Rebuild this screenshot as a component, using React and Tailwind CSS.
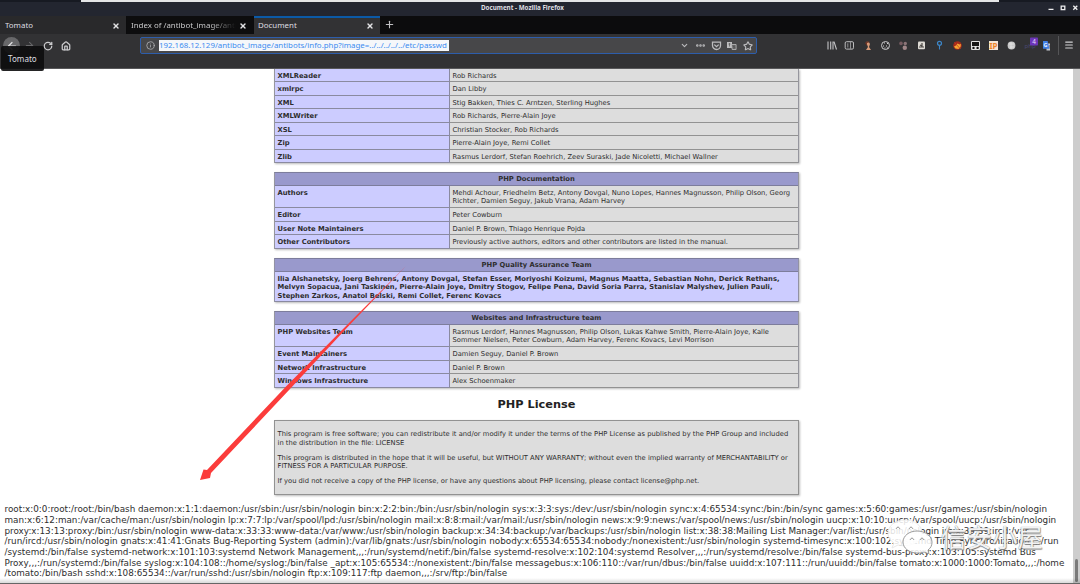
import React from "react";
import { ArrowLeft, ArrowRight, RotateCw, House, Info, ChevronDown, Ellipsis, Star, Menu, Plus, X } from "lucide-react";

const credits = [
  ["XMLReader", ["Rob Richards"], "h-[13px]"],
  ["xmlrpc", ["Dan Libby"], "h-[14px]"],
  ["XML", ["Stig Bakken, Thies C. Arntzen, Sterling Hughes"], "h-[13px]"],
  ["XMLWriter", ["Rob Richards, Pierre-Alain Joye"], "h-[14px]"],
  ["XSL", ["Christian Stocker, Rob Richards"], "h-[13px]"],
  ["Zip", ["Pierre-Alain Joye, Remi Collet"], "h-[14px]"],
  ["Zlib", ["Rasmus Lerdorf, Stefan Roehrich, Zeev Suraski, Jade Nicoletti, Michael Wallner"], "h-[13px]"],
];
const docs = [
  ["Authors", ["Mehdi Achour, Friedhelm Betz, Antony Dovgal, Nuno Lopes, Hannes Magnusson, Philip Olson, Georg", "Richter, Damien Seguy, Jakub Vrana, Adam Harvey"], "h-[22px]"],
  ["Editor", ["Peter Cowburn"], "h-[14px]"],
  ["User Note Maintainers", ["Daniel P. Brown, Thiago Henrique Pojda"], "h-[13px]"],
  ["Other Contributors", ["Previously active authors, editors and other contributors are listed in the manual."], "h-[14px]"],
];
const infra = [
  ["PHP Websites Team", ["Rasmus Lerdorf, Hannes Magnusson, Philip Olson, Lukas Kahwe Smith, Pierre-Alain Joye, Kalle", "Sommer Nielsen, Peter Cowburn, Adam Harvey, Ferenc Kovacs, Levi Morrison"], "h-[22px]"],
  ["Event Maintainers", ["Damien Seguy, Daniel P. Brown"], "h-[14px]"],
  ["Network Infrastructure", ["Daniel P. Brown"], "h-[13px]"],
  ["Windows Infrastructure", ["Alex Schoenmaker"], "h-[14px]"],
];
const qa = [
  "Ilia Alshanetsky, Joerg Behrens, Antony Dovgal, Stefan Esser, Moriyoshi Koizumi, Magnus Maatta, Sebastian Nohn, Derick Rethans,",
  "Melvyn Sopacua, Jani Taskinen, Pierre-Alain Joye, Dmitry Stogov, Felipe Pena, David Soria Parra, Stanislav Malyshev, Julien Pauli,",
  "Stephen Zarkos, Anatol Belski, Remi Collet, Ferenc Kovacs",
];
const passwd = [
  "root:x:0:0:root:/root:/bin/bash daemon:x:1:1:daemon:/usr/sbin:/usr/sbin/nologin bin:x:2:2:bin:/bin:/usr/sbin/nologin sys:x:3:3:sys:/dev:/usr/sbin/nologin sync:x:4:65534:sync:/bin:/bin/sync games:x:5:60:games:/usr/games:/usr/sbin/nologin",
  "man:x:6:12:man:/var/cache/man:/usr/sbin/nologin lp:x:7:7:lp:/var/spool/lpd:/usr/sbin/nologin mail:x:8:8:mail:/var/mail:/usr/sbin/nologin news:x:9:9:news:/var/spool/news:/usr/sbin/nologin uucp:x:10:10:uucp:/var/spool/uucp:/usr/sbin/nologin",
  "proxy:x:13:13:proxy:/bin:/usr/sbin/nologin www-data:x:33:33:www-data:/var/www:/usr/sbin/nologin backup:x:34:34:backup:/var/backups:/usr/sbin/nologin list:x:38:38:Mailing List Manager:/var/list:/usr/sbin/nologin irc:x:39:39:ircd:/var",
  "/run/ircd:/usr/sbin/nologin gnats:x:41:41:Gnats Bug-Reporting System (admin):/var/lib/gnats:/usr/sbin/nologin nobody:x:65534:65534:nobody:/nonexistent:/usr/sbin/nologin systemd-timesync:x:100:102:systemd Time Synchronization,,,:/run",
  "/systemd:/bin/false systemd-network:x:101:103:systemd Network Management,,,:/run/systemd/netif:/bin/false systemd-resolve:x:102:104:systemd Resolver,,,:/run/systemd/resolve:/bin/false systemd-bus-proxy:x:103:105:systemd Bus",
  "Proxy,,,:/run/systemd:/bin/false syslog:x:104:108::/home/syslog:/bin/false _apt:x:105:65534::/nonexistent:/bin/false messagebus:x:106:110::/var/run/dbus:/bin/false uuidd:x:107:111::/run/uuidd:/bin/false tomato:x:1000:1000:Tomato,,,:/home",
  "/tomato:/bin/bash sshd:x:108:65534::/var/run/sshd:/usr/sbin/nologin ftp:x:109:117:ftp daemon,,,:/srv/ftp:/bin/false",
];

function Heading({ children }) {
  return (
    <div className="h-[13px] border-b border-[#7d7d9c] bg-[#9999cc] text-center font-bold leading-[12px] tracking-[0.03px]">{children}</div>
  );
}

function Panel({ title, rows, open }) {
  return (
    <div className={(open ? "" : "border-t border-t-[#7d7d9c] ") + "w-[525px] border-x border-x-[#96969e] shadow-[0.5px_1px_2px_#bbb]"}>
      {title && <Heading>{title}</Heading>}
      {rows.map(([name, lines, height]) => (
        <div key={name} className={"flex " + height}>
          <div className="w-[175px] border-b border-r border-[#8a8aa0] bg-[#ccccff] pl-[2.5px] pt-[2.5px] font-bold leading-[8.5px] tracking-[0.025px]">{name}</div>
          <div className="flex-1 border-b border-[#929292] bg-[#dddddd] pl-[2.5px] pt-[2.5px] leading-[8.5px]">
            {lines.map((line) => <div key={line}>{line}</div>)}
          </div>
        </div>
      ))}
    </div>
  );
}

function Tab({ label, active, dark, fade }) {
  return (
    <div className={"relative flex h-[18px] w-[126px] items-center justify-between overflow-hidden pr-[6px] pt-[1px] " + (active ? "bg-[#323234] pl-[4px]" : dark ? "bg-[#0d0d0e] pl-[4px]" : "bg-[#29292b] pl-[5px]")}>
      {active && <div className="absolute inset-x-0 top-0 h-[2px] bg-[#0b5aa8]" />}
      <span className={"w-[105px] overflow-hidden whitespace-nowrap " + (fade ? "bg-gradient-to-r from-[#d8d8da] from-75% to-transparent bg-clip-text text-transparent" : "")}>{label}</span>
      <X size={8} strokeWidth={4} className="shrink-0 text-[#e4e4e6]" />
    </div>
  );
}

function ExtensionIcons() {
  return (
    <svg width="230" height="22" viewBox="820 34 230 22" fill="none">
      <path d="M828 41.5v8M830.7 41.5v8M833 41.5v8M834 41.7l2.5 7.8" stroke="#c4c4c6" strokeWidth="1.1" />
      <rect x="845.2" y="41.7" width="8.3" height="7.4" rx="1.3" stroke="#bbbbbd" strokeWidth="1" />
      <path d="M847.8 43.3v4.2M850.5 42v7" stroke="#8e8e90" />
      <path d="M866 42q3-1 4 2l-1 3 2 3h-5l2-3z" fill="#d89a78" />
      <path d="M865 43q2-3 5-1l-3 1v3z" fill="#6b3527" />
      <circle cx="885.5" cy="45.5" r="4" stroke="#c8c8ca" />
      <path d="M884 43h.9M887 43.5h1M883 46h1M886 46h1M884.5 48h1M887 48h1" stroke="#d2d2d4" strokeWidth="1.2" />
      <circle cx="901" cy="43.4" r="1.8" fill="#765b60" /><circle cx="905.3" cy="43.5" r="1.7" fill="#8b7477" /><circle cx="904.8" cy="47.8" r="2.2" fill="#a08688" />
      <rect x="918" y="41.5" width="7" height="7.8" rx="1" fill="#dedbd5" />
      <path d="M919 47h5M922 43v3l-2-1" stroke="#4b4744" strokeWidth="1.2" />
      <circle cx="939.5" cy="43.3" r="2" stroke="#3c86c8" strokeWidth="1.2" /><path d="M939.5 45.5v4" stroke="#3c86c8" strokeWidth="1.1" />
      <circle cx="957.5" cy="45.5" r="4.3" fill="#a32a1b" />
      <path d="M954 46.5l2-1 1.5-2 2 1 1.500-.5-.5 3-2 2-3-.5z" fill="#f4a532" /><path d="M954.5 42.500l6 6.500" stroke="#c93a20" strokeWidth=".8" />
      <rect x="971" y="41" width="9" height="9" rx="1" fill="#e1e1e1" /><path d="M972 42h7v4h-7z" fill="#151515" /><circle cx="973.5" cy="47.9" r="1.2" fill="#111" /><circle cx="977.6" cy="47.9" r="1.2" fill="#111" />
      <rect x="989" y="41" width="9" height="9" fill="#f4e6d5" />
      <text x="989.5" y="48.8" fontSize="8" fontWeight="bold" fontFamily="Noto Sans, sans-serif" fill="#ee8226">IP</text>
      <circle cx="1011.5" cy="45.5" r="3.9" fill="#c9c9c9" /><path d="M1009 44h5M1010 47h4M1011 42v7" stroke="#e8e8e8" strokeWidth=".7" />
      <text x="1024.5" y="48" fontSize="6" fontFamily="Noto Sans, sans-serif" fill="#4a4874">php</text>
      <rect x="1030" y="37.5" width="8" height="8" rx=".8" fill="#6b35b8" />
      <text x="1032.3" y="44" fontSize="6.4" fontFamily="Noto Sans, sans-serif" fill="#e8dcfa">4</text>
      <rect x="1046.5" y="43.5" width="5.3" height="7" fill="#c3c5cb" />
      <path d="M1048.500 46h2.500M1049.500 45v3.500" stroke="#7c7f88" strokeWidth=".7" />
      <path d="M1043 41h4.6l1.7 7.7H1043z" fill="#3f7fe5" />
      <text x="1043.4" y="47.2" fontSize="5.5" fontWeight="bold" fontFamily="Noto Sans, sans-serif" fill="#e7efff">G</text>
    </svg>
  );
}

function Browser() {
  return (
    <header className="h-[69px] font-['Noto_Sans',sans-serif] text-[#dedee0]">
      <div className="relative flex h-[16px] items-center justify-center bg-[#232630] text-[6.25px] font-bold text-[#dedfe2]">
        <div className="absolute left-[81px] top-0 h-[2px] w-[918px] bg-[#e4e5e6]" />
        <div className="absolute left-0 top-0 h-[2px] w-[81px] bg-[#171a22]" />
        <div className="absolute right-0 top-0 h-[2px] w-[81px] bg-[#171a22]" />
        <span className="mr-[35px] whitespace-nowrap">Document - Mozilla Firefox</span>
        <svg className="absolute right-0 top-0" width="36" height="16" fill="none" stroke="#eeeeef" strokeWidth="1.3">
          <path d="M4.500 9.400h5M29.300 5.800l4 4M33.300 5.800l-4 4" /><path d="M17.200 6.100h3.600v3.500h-3.600z" />
        </svg>
      </div>
      <div className="flex h-[18px] gap-[1px] bg-[#0c0c0d] text-[7.9px]">
        <Tab label="Tomato" />
        <Tab label="Index of /antibot_image/antibots" dark fade />
        <Tab label="Document" active />
        <Plus size={11} strokeWidth={2.4} className="ml-[2.5px] mt-[3px] text-[#c2c2c4]" />
      </div>
      <div className="relative flex h-[35px] border-b border-[#58585a] bg-[#323234]">
        <div className="flex w-[140px] items-start pl-[3px] pt-[3px]">
          <div className="flex size-[17px] items-center justify-center rounded-full bg-[#68686a]"><ArrowLeft size={12} strokeWidth={2.5} /></div>
          <ArrowRight size={11} strokeWidth={2.2} className="ml-[4px] mt-[3px] text-[#6a6a6c]" />
          <RotateCw size={10} strokeWidth={3} className="ml-[8px] mt-[3.5px] text-[#ccccce]" />
          <House size={10} strokeWidth={3} className="ml-[8px] mt-[3.5px] text-[#ccccce]" />
        </div>
        <div className="mt-[3px] flex h-[17px] w-[617px] items-center rounded-[2px] border border-[#2d5dab] bg-[#474749] pl-[5px]">
          <Info size={9} strokeWidth={2.2} className="text-[#b0b0b2]" />
          <span className="ml-[4px] h-[11px] w-[290px] whitespace-nowrap bg-[#f5f7fa] text-[7.88px] leading-[10.5px] text-[#3c8cf0]">192.168.12.129/antibot_image/antibots/info.php?image=../../../../../etc/passwd</span>
          <div className="ml-auto flex items-center pr-[3px] text-[#bcbcbe]">
            <ChevronDown size={9} strokeWidth={3} />
            <Ellipsis size={11} strokeWidth={3.4} className="ml-[6px]" />
            <svg className="ml-[5px]" width="11" height="10" fill="none" stroke="currentColor" strokeWidth="1.3"><path d="M1.5 1.2h8v3.3a4 4 0 0 1-8 0zM3.3 3.6l2.2 2.1 2.2-2.1" /></svg>
            <svg className="ml-[5px]" width="10" height="10"><path d="M0 1h5v6H0z" fill="#bcbcbe" /><path d="M4.5 3.5h4.6v5H5.2z" fill="#626264" stroke="#bcbcbe" strokeWidth=".8" /><path d="M1.5 3h2M2.5 2v3.5M6 6l1-1 1 2" stroke="#555" strokeWidth=".7" fill="none" /></svg>
            <Star size={10} strokeWidth={2.7} className="ml-[6px]" />
          </div>
        </div>
        <div className="ml-[63px]"><ExtensionIcons /></div>
        <div className="ml-[8px] mt-[2px] h-[19px] w-[1px] bg-[#555557]" />
        <Menu size={10} strokeWidth={2.6} className="ml-[5px] mt-[6px] text-[#d2d2d4]" />
        <div className="absolute left-[1px] top-[12px] h-[25px] w-[43px] rounded-[2px] bg-[#0c0c0d]/90 pl-[7px] text-[8.1px] leading-[25px]">Tomato</div>
      </div>
    </header>
  );
}

export default function App() {
  return (
    <div className="relative h-[584px] w-[1080px] overflow-hidden bg-white">
      <Browser />
      <main className="h-[515px] font-['DejaVu_Sans',sans-serif] text-[6.75px] text-[#2e2e2e]">
        <div className="ml-[274px] flex w-[525px] flex-col gap-[9px] whitespace-nowrap">
          <Panel rows={credits} open />
          <Panel title="PHP Documentation" rows={docs} />
          <div className="border-x border-t border-x-[#9292a4] border-t-[#7d7d9c] shadow-[0.5px_1px_2px_#bbb]">
            <Heading>PHP Quality Assurance Team</Heading>
            <div className="h-[30px] border-b border-[#8a8aa0] bg-[#ccccff] pl-[2.5px] pt-[2.5px] font-bold leading-[8.5px] tracking-[0.02px]">
              {qa.map((line) => <div key={line}>{line}</div>)}
            </div>
          </div>
          <Panel title="Websites and Infrastructure team" rows={infra} />
        </div>
        <h2 className="ml-[274px] h-[32px] w-[525px] text-center text-[11.3px] font-bold leading-[33px] text-[#222]">PHP License</h2>
        <div className="ml-[274px] flex h-[75px] w-[525px] flex-col gap-[6.6px] whitespace-nowrap border border-[#929292] bg-[#dddddd] pl-[2.5px] pt-[9.2px] leading-[8.5px] shadow-[0.5px_1px_2px_#bbb]">
          <p><span className="tracking-[0.02px]">This program is free software; you can redistribute it and/or modify it under the terms of the PHP License as published by the PHP Group and included</span><br />in the distribution in the file: LICENSE</p>
          <p>This program is distributed in the hope that it will be useful, but WITHOUT ANY WARRANTY; without even the implied warranty of MERCHANTABILITY or<br />FITNESS FOR A PARTICULAR PURPOSE.</p>
          <p>If you did not receive a copy of the PHP license, or have any questions about PHP licensing, please contact license@php.net.</p>
        </div>
        <div className="ml-[4.5px] mt-[9.3px] whitespace-nowrap text-[8.8px] leading-[10.65px]">
          {passwd.map((line) => <div key={line}>{line}</div>)}
        </div>
      </main>
      <div className="absolute bottom-0 right-0 top-[69px] w-[7px] bg-[#cdcdcd]"><div className="absolute bottom-[2px] left-[2px] h-[23px] w-[3px] rounded-full bg-[#7a7a7a]" /></div>
      <div className="absolute bottom-0 left-0 h-[6px] w-[1080px] border-b border-[#666] bg-gradient-to-b from-transparent to-black/15" />
      <svg className="absolute left-[190px] top-[255px]" width="225" height="235" viewBox="190 255 225 235">
        <path d="M406 266L350.500 324L289.500 389.500L211 473L210 478L200 480L203.500 469.500L207 470L286 386.500L349.500 322.500Z" fill="#fb3c3b" />
      </svg>
      <div className="absolute left-[887px] top-[518px] flex items-center">
        <svg width="54" height="36" fill="#fff" fillOpacity=".85" stroke="#909090" strokeWidth=".9">
          <path d="M18 2C8 2 1 8 1 15c0 5 3 8 6 10l-2 5 6-3c4 1 8 1 12 0 8-2 12-7 12-12C35 7 27 2 18 2z" stroke="#e6e6e6" />
          <path d="M30 13c-8 0-14 5-14 11s6 11 14 11c3 0 5 0 7-1l5 2-1-4c3-2 4-5 4-8 0-6-7-11-15-11z" />
          <path d="M9 11q2-4 4 0M22 11q2-4 4 0M23 22q2-4 4 0M33 22q2-4 4 0" fill="none" />
        </svg>
        <span className="font-['Noto_Sans_CJK_SC',sans-serif] text-[25.5px] leading-[32px] text-white/90 [text-shadow:0_0_1px_#777,0.5px_0.5px_1px_#777]">信安小屋</span>
      </div>
    </div>
  );
}
